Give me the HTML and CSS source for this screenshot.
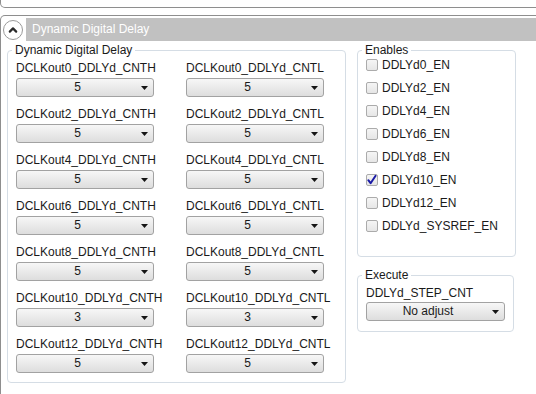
FILE: index.html
```html
<!DOCTYPE html>
<html>
<head>
<meta charset="utf-8">
<title>Dynamic Digital Delay</title>
<link rel="stylesheet" href="styles.css">
</head>
<body>
<div class="prev-panel"></div>
<section class="panel">
  <header class="panel-head">
    <button class="collapse-btn" type="button" aria-label="Collapse">
      <svg width="18" height="18" viewBox="0 0 18 18"><path d="M5.8 10.6 L9 7.4 L12.2 10.6" fill="none" stroke="#2a2a2a" stroke-width="2.2" stroke-linecap="round" stroke-linejoin="round"/></svg>
    </button>
    <div class="panel-title">Dynamic Digital Delay</div>
  </header>
  <div class="panel-body">
    <fieldset class="group delay-group">
      <legend>Dynamic Digital Delay</legend>
      <div class="delay-grid">
        <div class="field"><div class="field-label">DCLKout0_DDLYd_CNTH</div><div class="select"><span class="select-value">5</span><span class="select-arrow"></span></div></div>
        <div class="field"><div class="field-label">DCLKout0_DDLYd_CNTL</div><div class="select"><span class="select-value">5</span><span class="select-arrow"></span></div></div>
        <div class="field"><div class="field-label">DCLKout2_DDLYd_CNTH</div><div class="select"><span class="select-value">5</span><span class="select-arrow"></span></div></div>
        <div class="field"><div class="field-label">DCLKout2_DDLYd_CNTL</div><div class="select"><span class="select-value">5</span><span class="select-arrow"></span></div></div>
        <div class="field"><div class="field-label">DCLKout4_DDLYd_CNTH</div><div class="select"><span class="select-value">5</span><span class="select-arrow"></span></div></div>
        <div class="field"><div class="field-label">DCLKout4_DDLYd_CNTL</div><div class="select"><span class="select-value">5</span><span class="select-arrow"></span></div></div>
        <div class="field"><div class="field-label">DCLKout6_DDLYd_CNTH</div><div class="select"><span class="select-value">5</span><span class="select-arrow"></span></div></div>
        <div class="field"><div class="field-label">DCLKout6_DDLYd_CNTL</div><div class="select"><span class="select-value">5</span><span class="select-arrow"></span></div></div>
        <div class="field"><div class="field-label">DCLKout8_DDLYd_CNTH</div><div class="select"><span class="select-value">5</span><span class="select-arrow"></span></div></div>
        <div class="field"><div class="field-label">DCLKout8_DDLYd_CNTL</div><div class="select"><span class="select-value">5</span><span class="select-arrow"></span></div></div>
        <div class="field"><div class="field-label">DCLKout10_DDLYd_CNTH</div><div class="select"><span class="select-value">3</span><span class="select-arrow"></span></div></div>
        <div class="field"><div class="field-label">DCLKout10_DDLYd_CNTL</div><div class="select"><span class="select-value">3</span><span class="select-arrow"></span></div></div>
        <div class="field"><div class="field-label">DCLKout12_DDLYd_CNTH</div><div class="select"><span class="select-value">5</span><span class="select-arrow"></span></div></div>
        <div class="field"><div class="field-label">DCLKout12_DDLYd_CNTL</div><div class="select"><span class="select-value">5</span><span class="select-arrow"></span></div></div>
      </div>
    </fieldset>
    <div class="side">
      <fieldset class="group enables">
        <legend>Enables</legend>
        <div class="check-list">
          <div class="check-row"><span class="check"></span><span>DDLYd0_EN</span></div>
          <div class="check-row"><span class="check"></span><span>DDLYd2_EN</span></div>
          <div class="check-row"><span class="check"></span><span>DDLYd4_EN</span></div>
          <div class="check-row"><span class="check"></span><span>DDLYd6_EN</span></div>
          <div class="check-row"><span class="check"></span><span>DDLYd8_EN</span></div>
          <div class="check-row"><span class="check is-checked"><svg width="12" height="12" viewBox="0 0 12 12"><path d="M2.3 6.2 L4.6 9.2 L9.6 1.8" fill="none" stroke="#1b1ba6" stroke-width="2" stroke-linecap="round" stroke-linejoin="round"/></svg></span><span>DDLYd10_EN</span></div>
          <div class="check-row"><span class="check"></span><span>DDLYd12_EN</span></div>
          <div class="check-row"><span class="check"></span><span>DDLYd_SYSREF_EN</span></div>
        </div>
      </fieldset>
      <fieldset class="group execute">
        <legend>Execute</legend>
        <div class="field-label exec-label">DDLYd_STEP_CNT</div>
        <div class="select exec-select"><span class="select-value">No adjust</span><span class="select-arrow"></span></div>
      </fieldset>
    </div>
  </div>
</section>
</body>
</html>
```
FILE: styles.css
```css
* {
  box-sizing: border-box;
}

html,
body {
  margin: 0;
  padding: 0;
  background: #ffffff;
}

body {
  width: 536px;
  height: 394px;
  overflow: hidden;
  font-family: "Liberation Sans", Arial, sans-serif;
  font-size: 12px;
  color: #1a1a1a;
}

.prev-panel {
  height: 8px;
  margin-right: -20px;
  border: 1px solid #8e8e8e;
  border-top: none;
  border-radius: 0 0 5px 5px;
}

.panel {
  margin-top: 7px;
  margin-right: -20px;
  height: 379px;
  border: 1px solid #8e8e8e;
  border-bottom: none;
  border-radius: 5px 5px 0 0;
}

.panel-head {
  display: flex;
  align-items: center;
  height: 23px;
  margin-top: 2px;
}

.collapse-btn {
  display: flex;
  align-items: center;
  justify-content: center;
  width: 20px;
  height: 20px;
  margin: 0 0 0 2px;
  padding: 0;
  border: 1px solid #9a9a9a;
  border-radius: 50%;
  background: #ffffff;
}

.panel-title {
  flex: 1;
  height: 23px;
  margin-left: 3px;
  padding-left: 6px;
  background: #c1c1c1;
  color: #ffffff;
  line-height: 23px;
}

.panel-body {
  display: flex;
  align-items: flex-start;
  margin-top: 2px;
  padding-left: 6px;
}

.group {
  margin: 0;
  min-width: 0;
  border: 1px solid #d5dde5;
  border-radius: 4px;
}

.group legend {
  margin-left: -4px;
  padding: 0 3px;
  line-height: 14px;
}

.delay-group {
  width: 339px;
  padding: 4px 8px 9px 8px;
}

.delay-grid {
  display: grid;
  grid-template-columns: 138px 138px;
  column-gap: 32px;
  row-gap: 10px;
}

.field-label {
  line-height: 14px;
  white-space: nowrap;
}

.field .field-label {
  margin-bottom: 3px;
}

.select {
  display: flex;
  align-items: center;
  height: 19px;
  border: 1px solid #a2a2a2;
  border-radius: 3px;
  background: linear-gradient(#f7f7f7, #dddddd);
}

.select-value {
  flex: 1;
  text-align: center;
  line-height: 17px;
}

.select-arrow {
  width: 7px;
  height: 4px;
  margin: 1px 5px 0 3px;
  background: #151515;
  clip-path: polygon(0 0, 100% 0, 50% 100%);
}

.side {
  display: flex;
  flex-direction: column;
  align-items: flex-start;
  margin-left: 11px;
}

.enables {
  width: 159px;
  padding: 0 8px 22px 8px;
}

.check-list {
  display: flex;
  flex-direction: column;
  gap: 7px;
}

.check-row {
  display: flex;
  align-items: center;
  height: 16px;
  white-space: nowrap;
}

.check {
  display: flex;
  align-items: center;
  justify-content: center;
  width: 12px;
  height: 12px;
  margin-right: 4px;
  border: 1px solid #ababab;
  border-radius: 2px;
  background: linear-gradient(#f5f5f5, #e6e6e6);
}

.check svg {
  flex: none;
}

.execute {
  width: 157px;
  margin-top: 11px;
  padding: 4px 8px 10px 8px;
}

.exec-label {
  margin-bottom: 2px;
}

.exec-select {
  width: 139px;
}
```
